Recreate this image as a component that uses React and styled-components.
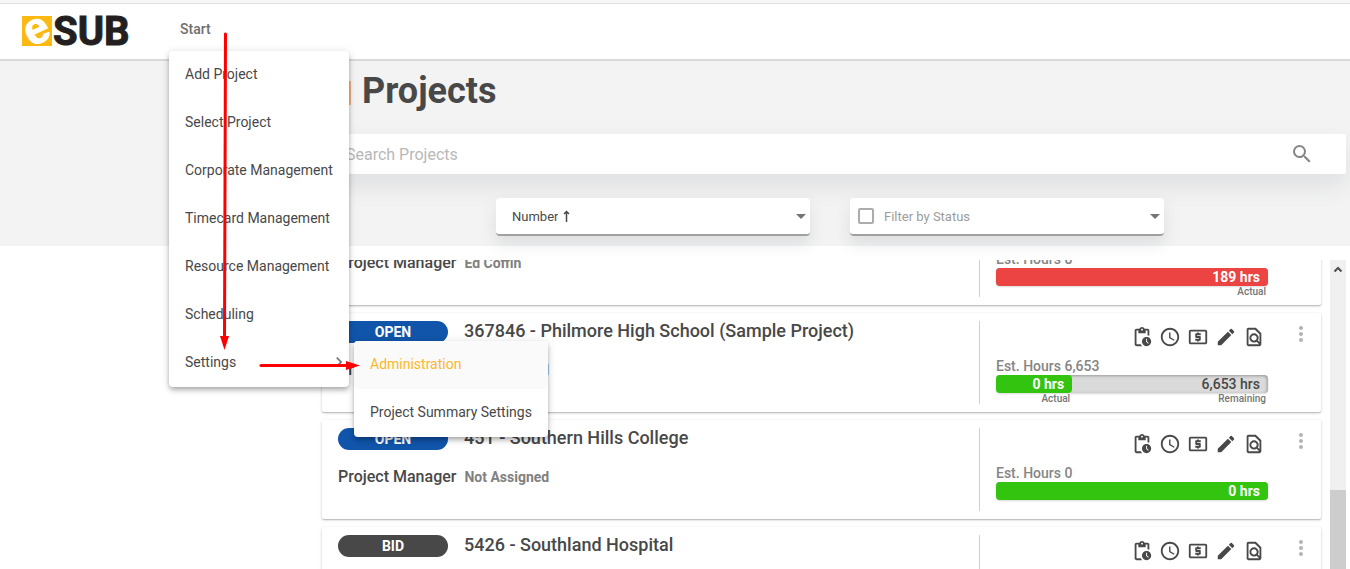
import React, { useLayoutEffect, useRef } from "react";
import styled, { createGlobalStyle } from "styled-components";
import {
  MdOutlinePendingActions,
  MdAccessTime,
  MdOutlineLocalAtm,
  MdEdit,
  MdOutlineFindInPage,
  MdMoreVert,
  MdSearch,
  MdChevronRight,
  MdArrowDropDown,
} from "react-icons/md";

const GlobalStyle = createGlobalStyle`
  * { box-sizing: border-box; }
  body {
    margin: 0;
    background: #fff;
    color: #484848;
    font-family: Roboto, "Liberation Sans", sans-serif;
  }
  button, input, select { font-family: inherit; }
`;

const Page = styled.div`
  display: flex;
  flex-direction: column;
  height: 100vh;
  overflow: hidden;
  position: relative;
`;

const Header = styled.header`
  display: flex;
  align-items: center;
  flex: none;
  height: 61px;
  padding: 0 22px 1px;
  background: #fff;
  border-top: 3px solid #f7f7f7;
  border-bottom: 2px solid #d9d9d9;
  box-shadow: inset 0 1px 0 #dedede;
`;

const Logo = styled.a`
  display: flex;
  width: 136px;
  svg { display: block; }
`;

const NavItem = styled.nav`
  position: relative;
  margin-top: -4px;
`;

const NavButton = styled.button`
  border: 0;
  background: none;
  padding: 8px 22px;
  color: #6e6e6e;
  font-size: 14px;
  font-weight: 500;
  line-height: 20px;
`;

const Menu = styled.ul`
  position: absolute;
  z-index: ${(p) => (p.$sub ? 3 : 2)};
  top: ${(p) => (p.$sub ? "2px" : "40px")};
  left: ${(p) => (p.$sub ? "185px" : "11px")};
  min-width: 180px;
  margin: 0;
  padding: 0;
  list-style: none;
  background: #fff;
  border-radius: 4px;
  box-shadow: 0 2px 4px -1px rgba(0, 0, 0, 0.2), 0 4px 5px rgba(0, 0, 0, 0.14),
    0 1px 10px rgba(0, 0, 0, 0.12);
`;

const MenuItem = styled.li`
  position: relative;
`;

const MenuLink = styled.a`
  display: flex;
  align-items: center;
  justify-content: space-between;
  height: 48px;
  padding: 0 0 2px 16px;
  padding-right: ${(p) => (p.$parent ? "0" : "16px")};
  color: ${(p) => (p.$active ? "#fbb829" : "#484848")};
  background: ${(p) => (p.$active ? "#fafafa" : "transparent")};
  border-radius: 4px;
  font-size: 14px;
  line-height: 20px;
  white-space: nowrap;
  text-decoration: none;
  svg { color: #777; }
`;

const Band = styled.section`
  flex: none;
  height: 185px;
  padding: 8px 4px 0 314px;
  background: #f3f3f3;
`;

const Heading = styled.h1`
  display: flex;
  align-items: center;
  gap: 11px;
  margin: 0 0 21px 13px;
  font-size: 36px;
  font-weight: 700;
  line-height: 44px;
`;

const HeadingMark = styled.span`
  width: 24px;
  height: 24px;
  margin-top: 4px;
  background: linear-gradient(90deg, #e5a02f 22px, #f3b183 22px);
`;

const SearchBox = styled.label`
  display: flex;
  align-items: center;
  height: 40px;
  margin-left: 7px;
  padding: 0 32px 0 25px;
  background: #fff;
  border-radius: 2px;
  box-shadow: 0 12px 24px rgba(60, 75, 90, 0.11);
  svg { color: #858585; }
`;

const SearchInput = styled.input`
  flex: 1;
  border: 0;
  outline: 0;
  padding: 2px 0 0;
  background: none;
  font-size: 16px;
  line-height: 24px;
  color: #484848;
  &::placeholder { color: #b8b8b8; opacity: 1; }
`;

const Filters = styled.div`
  display: flex;
  justify-content: center;
  gap: 40px;
  margin-top: 24px;
`;

const FilterBox = styled.div`
  display: flex;
  align-items: center;
  width: 314px;
  height: 38px;
  padding-left: ${(p) => (p.$check ? "8px" : "16px")};
  background: #fff;
  border-bottom: 2px solid #a0a0a0;
  border-radius: 4px;
  box-shadow: 0 8px 16px rgba(60, 75, 90, 0.12);
`;

const FilterSelect = styled.select`
  appearance: none;
  field-sizing: content;
  border: 0;
  outline: 0;
  margin: 0;
  padding: 2px 0 0;
  background: none;
  font-size: 13px;
  line-height: 20px;
  color: ${(p) => (p.$muted ? "#9c9c9c" : "#484848")};
`;

const SortArrow = styled.svg`
  flex: none;
  margin-left: 5px;
`;

const Caret = styled(MdArrowDropDown)`
  flex: none;
  margin: 0 -3px 0 auto;
  color: #757575;
`;

const Check = styled.input`
  appearance: none;
  flex: none;
  width: 16px;
  height: 16px;
  margin: 0 10px 0 0;
  border: 2px solid #acacac;
  border-radius: 2px;
  background: #fff;
`;

const Results = styled.main`
  display: flex;
  flex: 1;
  min-height: 0;
  margin: 14px 4px 0 314px;
`;

const List = styled.div`
  flex: 1;
  overflow-y: auto;
  scrollbar-width: none;
  padding: 0 9px 0 8px;
`;

const Card = styled.article`
  display: flex;
  height: 99px;
  margin-bottom: 8px;
  padding: 8px 16px;
  background: #fff;
  border-radius: 2px;
  box-shadow: 0 1px 3px rgba(0, 0, 0, 0.2), 0 1px 1px rgba(0, 0, 0, 0.14);
`;

const Info = styled.div`
  flex: 1;
`;

const InfoRow = styled.div`
  display: flex;
  align-items: center;
  gap: ${(p) => p.$gap}px;
  margin-bottom: 16px;
`;

const Pill = styled.span`
  width: 110px;
  border-radius: 11px;
  background: ${(p) => (p.$open ? "#1155ab" : "#484848")};
  color: #fff;
  font-size: 14px;
  font-weight: 700;
  line-height: 22px;
  text-align: center;
`;

const CardTitle = styled.h2`
  margin: 0;
  padding-bottom: 2px;
  font-size: 18px;
  font-weight: 500;
  line-height: 20px;
`;

const Role = styled.span`
  font-size: 16px;
  font-weight: 500;
  line-height: 22px;
`;

const Person = styled.span`
  color: #808080;
  font-size: 14px;
  font-weight: 700;
  line-height: 22px;
`;

const Hours = styled.div`
  width: 289px;
  height: 83px;
  padding-left: 16px;
  border-left: 1px solid #d0d0d0;
`;

const Actions = styled.div`
  display: flex;
  justify-content: flex-end;
  gap: 6px;
  padding: 5px 3px 10px 0;
`;

const IconButton = styled.button`
  display: flex;
  border: 0;
  padding: 0;
  background: none;
  color: ${(p) => (p.$pale ? "#b3b3b3" : "#484848")};
`;

const Estimate = styled.div`
  padding-bottom: 1px;
  color: #858585;
  font-size: 14px;
  font-weight: 500;
  line-height: 16px;
`;

const Bar = styled.div`
  display: flex;
  height: 18px;
  border-radius: 4px;
  background: #dadada;
  box-shadow: inset -1px 1px 3px rgba(0, 0, 0, 0.3), 0 1px 2px rgba(0, 0, 0, 0.15);
`;

const Segment = styled.div`
  width: ${(p) => p.$width};
  padding-right: 8px;
  border-radius: 4px;
  background: ${(p) => p.$color};
  color: ${(p) => (p.$dark ? "#484848" : "#fff")};
  font-size: 14px;
  font-weight: ${(p) => (p.$dark ? 500 : 700)};
  line-height: 18px;
  text-align: right;
`;

const Captions = styled.div`
  display: flex;
  color: #757575;
  font-size: 10px;
  font-weight: 500;
  line-height: 12px;
`;

const Caption = styled.span`
  width: ${(p) => p.$width};
  padding-right: 2px;
  text-align: right;
`;

const Kebab = styled.div`
  width: 37px;
  padding: 1px 0 0 21px;
`;

const ScrollTrack = styled.div`
  display: flex;
  flex-direction: column;
  align-items: center;
  justify-content: space-between;
  width: 16px;
  padding-top: 6px;
  background: #f0f0f0;
`;

const ScrollThumb = styled.div`
  width: 100%;
  height: 79px;
  background: #cdcdcd;
`;

const Arrows = styled.svg`
  position: absolute;
  z-index: 4;
  top: 0;
  left: 0;
  pointer-events: none;
`;

const RED = "#ec4343";
const GREEN = "#32c40e";

const projects = [
  {
    status: "OPEN",
    title: "1042 - Harbor Medical Center",
    manager: "Ed Coffin",
    estimate: "8",
    segments: [{ width: "100%", color: RED, text: "189 hrs", caption: "Actual" }],
  },
  {
    status: "OPEN",
    title: "367846 - Philmore High School (Sample Project)",
    manager: "Not Assigned",
    estimate: "6,653",
    segments: [
      { width: "28%", color: GREEN, text: "0 hrs", caption: "Actual" },
      { width: "72%", color: "transparent", text: "6,653 hrs", caption: "Remaining", dark: true },
    ],
  },
  {
    status: "OPEN",
    title: "451 - Southern Hills College",
    manager: "Not Assigned",
    estimate: "0",
    segments: [{ width: "100%", color: GREEN, text: "0 hrs" }],
  },
  {
    status: "BID",
    title: "5426 - Southland Hospital",
    manager: "Not Assigned",
    estimate: "0",
    segments: [{ width: "100%", color: GREEN, text: "0 hrs" }],
  },
];

const actions = [
  ["Pending actions", MdOutlinePendingActions],
  ["Time", MdAccessTime],
  ["Costs", MdOutlineLocalAtm],
  ["Edit", MdEdit],
  ["Find in page", MdOutlineFindInPage],
];

const menuItems = [
  "Add Project",
  "Select Project",
  "Corporate Management",
  "Timecard Management",
  "Resource Management",
  "Scheduling",
];

function ProjectCard({ project }) {
  return (
    <Card>
      <Info>
        <InfoRow $gap={16}>
          <Pill $open={project.status === "OPEN"}>{project.status}</Pill>
          <CardTitle>{project.title}</CardTitle>
        </InfoRow>
        <InfoRow $gap={8}>
          <Role>Project Manager</Role>
          <Person>{project.manager}</Person>
        </InfoRow>
      </Info>
      <Hours>
        <Actions>
          {actions.map(([label, Icon]) => (
            <IconButton key={label} aria-label={label}>
              <Icon size={22} />
            </IconButton>
          ))}
        </Actions>
        <Estimate>Est. Hours {project.estimate}</Estimate>
        <Bar>
          {project.segments.map((s) => (
            <Segment key={s.text} $width={s.width} $color={s.color} $dark={s.dark}>
              {s.text}
            </Segment>
          ))}
        </Bar>
        <Captions>
          {project.segments.map((s) => (
            <Caption key={s.text} $width={s.width}>{s.caption}</Caption>
          ))}
        </Captions>
      </Hours>
      <Kebab>
        <IconButton $pale aria-label="More">
          <MdMoreVert size={24} />
        </IconButton>
      </Kebab>
    </Card>
  );
}

export default function App() {
  const list = useRef(null);

  useLayoutEffect(() => {
    list.current.scrollTop = 54;
  }, []);

  return (
    <Page>
      <GlobalStyle />
      <Header>
        <Logo href="#" aria-label="eSUB">
          <svg width="112" height="32" viewBox="0 0 112 32">
            <rect width="30" height="30" y="1" fill="#fdb913" />
            <text
              x="15"
              y="28"
              textAnchor="middle"
              transform="rotate(-24 15 16)"
              fill="#fff"
              stroke="#fff"
              fontFamily="Liberation Sans, sans-serif"
              fontWeight="700"
              fontSize="44"
            >
              e
            </text>
            <text
              x="31"
              y="30"
              fill="#231f20"
              stroke="#231f20"
              fontFamily="Roboto, sans-serif"
              fontWeight="700"
              fontSize="40"
            >
              SUB
            </text>
          </svg>
        </Logo>
        <NavItem>
          <NavButton>Start</NavButton>
          <Menu>
            {menuItems.map((item) => (
              <MenuItem key={item}>
                <MenuLink href="#">{item}</MenuLink>
              </MenuItem>
            ))}
            <MenuItem>
              <MenuLink href="#" $parent>
                Settings
                <MdChevronRight size={20} />
              </MenuLink>
              <Menu $sub>
                <MenuItem>
                  <MenuLink href="#" $active>Administration</MenuLink>
                </MenuItem>
                <MenuItem>
                  <MenuLink href="#">Project Summary Settings</MenuLink>
                </MenuItem>
              </Menu>
            </MenuItem>
          </Menu>
        </NavItem>
      </Header>

      <Band>
        <Heading>
          <HeadingMark />
          Projects
        </Heading>
        <SearchBox>
          <SearchInput type="text" placeholder="Search Projects" aria-label="Search Projects" />
          <MdSearch size={24} />
        </SearchBox>
        <Filters>
          <FilterBox>
            <FilterSelect aria-label="Sort by">
              <option>Number</option>
            </FilterSelect>
            <SortArrow width="7" height="12" viewBox="0 0 7 12" aria-label="ascending">
              <path d="M3.500 12V2M1 4l2.500-2.500L6 4" fill="none" stroke="#484848" strokeWidth="1.500" />
            </SortArrow>
            <Caret size={24} />
          </FilterBox>
          <FilterBox $check>
            <Check type="checkbox" aria-label="Enable status filter" />
            <FilterSelect $muted aria-label="Filter by Status">
              <option>Filter by Status</option>
            </FilterSelect>
            <Caret size={24} />
          </FilterBox>
        </Filters>
      </Band>

      <Results>
        <List ref={list}>
          {projects.map((p) => (
            <ProjectCard key={p.title} project={p} />
          ))}
        </List>
        <ScrollTrack>
          <svg width="10" height="7" viewBox="0 0 10 7">
            <path d="M1.5 5.5 5 2l3.5 3.5" fill="none" stroke="#505050" strokeWidth="2" />
          </svg>
          <ScrollThumb />
        </ScrollTrack>
      </Results>

      <Arrows width="370" height="380" viewBox="0 0 370 380" aria-hidden="true">
        <g stroke="#f00" strokeWidth="3" strokeLinecap="round">
          <path d="M225.5 34 224.500 338" />
          <path d="M261 365.500H348" />
        </g>
        <path d="M220 336h9l-4.500 14z" fill="#f00" />
        <path d="M346 361v9l14-4.500z" fill="#f00" />
      </Arrows>
    </Page>
  );
}
